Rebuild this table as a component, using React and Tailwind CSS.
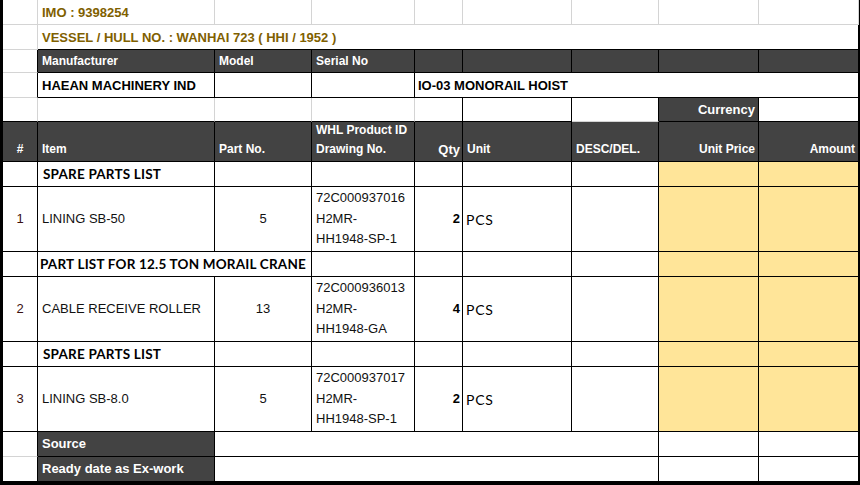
import React from 'react';

const GRAY = 'border-[#d4d4d4]';
const BLACK = 'border-black';

const Cell = ({ c = '', bc = BLACK, children }) => (
  <div className={`flex items-center border-r border-b ${bc} overflow-hidden whitespace-nowrap ${c}`}>
    {children}
  </div>
);

const dark = 'bg-[#434343] text-white font-bold';
const yellow = 'bg-[#ffe599]';
const calibri = "font-['Lato','Liberation_Sans',sans-serif]";
const sectionText = `${calibri} font-bold text-[13.5px] tracking-[0.2px] text-black`;

const SectionRow = ({ title, wide }) => (
  <>
    <Cell />
    {wide ? (
      <Cell c={`col-span-2 pl-[2px] ${sectionText}`}>{title}</Cell>
    ) : (
      <>
        <Cell c={`pl-[5px] ${sectionText}`}>{title}</Cell>
        <Cell />
      </>
    )}
    <Cell />
    <Cell />
    <Cell />
    <Cell />
    <Cell c={yellow} />
    <Cell c={yellow} />
  </>
);

const ItemRow = ({ no, name, part, ids, qty }) => (
  <>
    <Cell c="justify-center text-[#3a1010]">{no}</Cell>
    <Cell c="pl-1 text-[#111]">{name}</Cell>
    <Cell c="justify-center text-[#111]">{part}</Cell>
    <Cell c="pl-1 text-[#111]">
      <div className="flex flex-col leading-[20.5px]">
        {ids.map((l) => (
          <span key={l}>{l}</span>
        ))}
      </div>
    </Cell>
    <Cell c="justify-end pr-[2px] font-bold text-black">{qty}</Cell>
    <Cell c={`pl-[3px] ${calibri} text-[14px] tracking-[0.8px] text-black`}>PCS</Cell>
    <Cell />
    <Cell c={yellow} />
    <Cell c={yellow} />
  </>
);

export default function App() {
  return (
    <div className="w-[860px] h-[485px] bg-white overflow-hidden">
      <div className="grid grid-cols-[35px_177px_97px_103px_48px_109px_87px_100px_100px] grid-rows-[25px_25px_23px_25px_24px_40px_25px_65px_25px_65px_25px_65px_25px_25px] border-l-[3px] border-r border-b-[3px] border-black font-['Liberation_Sans',Arial,sans-serif] text-[13px]">
        {/* IMO */}
        <Cell bc={GRAY} />
        <Cell bc={GRAY} c="pl-1 pt-[2px] font-bold text-[#7f6000]">IMO : 9398254</Cell>
        <Cell bc={GRAY} />
        <Cell bc={GRAY} />
        <Cell bc={GRAY} />
        <Cell bc={GRAY} />
        <Cell bc={GRAY} />
        <Cell bc={GRAY} />
        <Cell bc={GRAY} />

        {/* vessel */}
        <Cell bc={GRAY} />
        <Cell bc="border-b-black border-r-black" c="col-span-8 pl-1 pt-[2px] font-bold text-[#7f6000]">
          VESSEL / HULL NO. : WANHAI 723 ( HHI / 1952 )
        </Cell>

        {/* manufacturer header */}
        <Cell bc="border-r-black border-b-[#d4d4d4]" />
        <Cell c={`${dark} pl-1 text-[12px]`}>Manufacturer</Cell>
        <Cell c={`${dark} pl-1 text-[12px]`}>Model</Cell>
        <Cell c={`${dark} pl-1 text-[12px]`}>Serial No</Cell>
        <Cell c={dark} />
        <Cell c={dark} />
        <Cell c={dark} />
        <Cell c={dark} />
        <Cell c={dark} />

        {/* manufacturer values */}
        <Cell bc="border-r-black border-b-[#d4d4d4]" />
        <Cell c="pl-1 pt-[1px] font-bold text-black">HAEAN MACHINERY IND</Cell>
        <Cell />
        <Cell />
        <Cell c="col-span-5 pl-[3px] pt-[1px] font-bold text-black">IO-03 MONORAIL HOIST</Cell>

        {/* currency row */}
        <Cell bc="border-r-[#d4d4d4] border-b-black" />
        <Cell bc="border-r-[#d4d4d4] border-b-black" />
        <Cell bc="border-r-[#d4d4d4] border-b-black" />
        <Cell bc="border-r-[#d4d4d4] border-b-black" />
        <Cell />
        <Cell />
        <Cell bc="border-r-black border-b-[#d4d4d4]" />
        <Cell c={`${dark} justify-end pr-[3px]`}>Currency</Cell>
        <Cell />

        {/* table header */}
        <Cell c={`${dark} text-[12px] justify-center items-end pb-[3px]`}>#</Cell>
        <Cell c={`${dark} text-[12px] pl-1 items-end pb-[3px]`}>Item</Cell>
        <Cell c={`${dark} text-[12px] pl-1 items-end pb-[3px]`}>Part No.</Cell>
        <Cell c={`${dark} text-[12px] pl-1 items-end pb-[2px]`}>
          <div className="flex flex-col leading-[19px]">
            <span>WHL Product ID</span>
            <span>Drawing No.</span>
          </div>
        </Cell>
        <Cell c={`${dark} text-[13px] justify-end pr-[2px] items-end pb-[2px]`}>Qty</Cell>
        <Cell c={`${dark} text-[12px] pl-1 items-end pb-[3px]`}>Unit</Cell>
        <Cell c={`${dark} text-[12px] pl-1 items-end pb-[3px]`}>DESC/DEL.</Cell>
        <Cell c={`${dark} text-[12px] justify-end pr-[3px] items-end pb-[3px]`}>Unit Price</Cell>
        <Cell c={`${dark} text-[12px] justify-end pr-[3px] items-end pb-[3px]`}>Amount</Cell>

        <SectionRow title="SPARE PARTS LIST" />
        <ItemRow no="1" name="LINING SB-50" part="5" ids={['72C000937016', 'H2MR-', 'HH1948-SP-1']} qty="2" />

        <SectionRow title="PART LIST FOR 12.5 TON MORAIL CRANE" wide />
        <ItemRow no="2" name="CABLE RECEIVE ROLLER" part="13" ids={['72C000936013', 'H2MR-', 'HH1948-GA']} qty="4" />

        <SectionRow title="SPARE PARTS LIST" />
        <ItemRow no="3" name="LINING SB-8.0" part="5" ids={['72C000937017', 'H2MR-', 'HH1948-SP-1']} qty="2" />

        {/* footer rows */}
        <Cell bc="border-r-black border-b-[#d4d4d4]" />
        <Cell c={`${dark} pl-1`}>Source</Cell>
        <Cell c="col-span-5" />
        <Cell />
        <Cell />

        <Cell bc="border-r-black border-b-black" />
        <Cell c={`${dark} pl-1`}>Ready date as Ex-work</Cell>
        <Cell c="col-span-5" />
        <Cell />
        <Cell />
      </div>
    </div>
  );
}
